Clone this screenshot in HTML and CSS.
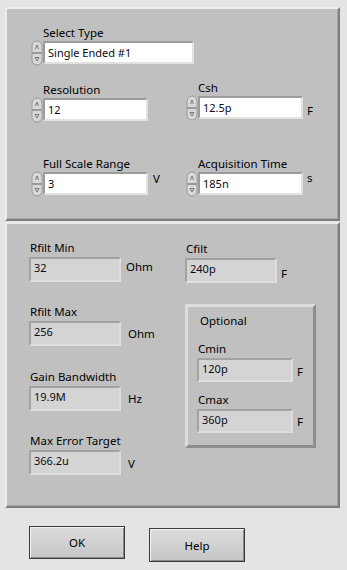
FILE: index.html
```html
<!DOCTYPE html>
<html lang="en">
<head>
    <meta charset="UTF-8">
    <meta name="viewport" content="width=device-width, initial-scale=1.0">
    <title>ADC Settings</title>
    <link rel="stylesheet" href="styles.css">
</head>
<body>
    <svg class="defs" width="0" height="0">
        <symbol id="spin" viewBox="0 0 12 26">
            <path d="M1 12.5 V6 a5 5 0 0 1 10 0 V12.5 Z" fill="#d8d8d8" stroke="#9a9a9a"/>
            <path d="M1 13.5 V20 a5 5 0 0 0 10 0 V13.5 Z" fill="#d8d8d8" stroke="#9a9a9a"/>
            <path d="M4.5 9 L6 5 L7.5 9" fill="none" stroke="#7a7a7a"/>
            <path d="M4 17.5 H8 L6 21 Z" fill="none" stroke="#7a7a7a"/>
        </symbol>
    </svg>

    <div class="panel panel-top">
        <div class="row">
            <div class="field">
                <div class="label">Select Type</div>
                <div class="ctl">
                    <svg class="spin"><use href="#spin"/></svg>
                    <div class="edit wide">Single Ended #1</div>
                </div>
            </div>
        </div>
        <div class="row row-2">
            <div class="field col1 down2">
                <div class="label">Resolution</div>
                <div class="ctl">
                    <svg class="spin"><use href="#spin"/></svg>
                    <div class="edit">12</div>
                </div>
            </div>
            <div class="field">
                <div class="label">Csh</div>
                <div class="ctl">
                    <svg class="spin"><use href="#spin"/></svg>
                    <div class="edit">12.5p</div>
                    <span class="unit off-9">F</span>
                </div>
            </div>
        </div>
        <div class="row row-3">
            <div class="field col1">
                <div class="label">Full Scale Range</div>
                <div class="ctl">
                    <svg class="spin"><use href="#spin"/></svg>
                    <div class="edit">3</div>
                    <span class="unit off-1 gap5">V</span>
                </div>
            </div>
            <div class="field">
                <div class="label">Acquisition Time</div>
                <div class="ctl">
                    <svg class="spin"><use href="#spin"/></svg>
                    <div class="edit">185n</div>
                    <span class="unit off-0">s</span>
                </div>
            </div>
        </div>
    </div>

    <div class="panel panel-bottom">
        <div class="row">
            <div class="col1-b">
                <div class="out">
                    <div class="out-label">Rfilt Min</div>
                    <div class="out-row">
                        <div class="ind">32</div>
                        <span class="unit off-3 gap5">Ohm</span>
                    </div>
                </div>
                <div class="out space-23">
                    <div class="out-label">Rfilt Max</div>
                    <div class="out-row">
                        <div class="ind">256</div>
                        <span class="unit off-6 gap7">Ohm</span>
                    </div>
                </div>
                <div class="out space-24">
                    <div class="out-label">Gain Bandwidth</div>
                    <div class="out-row">
                        <div class="ind">19.9M</div>
                        <span class="unit off-6 gap7">Hz</span>
                    </div>
                </div>
                <div class="out space-23">
                    <div class="out-label">Max Error Target</div>
                    <div class="out-row">
                        <div class="ind">366.2u</div>
                        <span class="unit off-7 gap7">V</span>
                    </div>
                </div>
            </div>
            <div class="col2-b">
                <div class="out">
                    <div class="out-label">Cfilt</div>
                    <div class="out-row">
                        <div class="ind">240p</div>
                        <span class="unit off-9">F</span>
                    </div>
                </div>
                <div class="group">
                    <div class="group-title">Optional</div>
                    <div class="out">
                        <div class="out-label">Cmin</div>
                        <div class="out-row">
                            <div class="ind small">120p</div>
                            <span class="unit off-7">F</span>
                        </div>
                    </div>
                    <div class="out space-11">
                        <div class="out-label">Cmax</div>
                        <div class="out-row">
                            <div class="ind small">360p</div>
                            <span class="unit off-6">F</span>
                        </div>
                    </div>
                </div>
            </div>
        </div>
    </div>

    <div class="buttons">
        <button class="btn">OK</button>
        <button class="btn btn-help">Help</button>
    </div>
</body>
</html>
```

FILE: styles.css
```css
body {
    margin: 0;
    width: 347px;
    height: 570px;
    overflow: hidden;
    background-color: #e4e4e4;
    font-family: "Noto Sans", "Liberation Sans", sans-serif;
    font-size: 11.5px;
    color: #000;
}
.defs {
    position: absolute;
}
.panel {
    margin-left: 5px;
    width: 335px;
    box-sizing: border-box;
    background-color: #c0c0c0;
    border: 2px solid;
    border-color: #ececec #7d7d7d #7d7d7d #ececec;
    box-shadow: inset -1px -1px 0 #a8a8a8;
}
.panel-top {
    margin-top: 7px;
    height: 214px;
    padding: 17px 0 0 24px;
}
.panel-bottom {
    margin-top: 1px;
    height: 286px;
    padding: 17px 0 0 22px;
}
.row {
    display: flex;
    align-items: flex-start;
}
.row-2 {
    margin-top: 15px;
}
.row-3 {
    margin-top: 34px;
}
.col1 {
    width: 155px;
}
.down2 {
    margin-top: 2px;
}
.label {
    line-height: 14px;
    padding-left: 12px;
    white-space: nowrap;
}
.ctl {
    display: flex;
    align-items: flex-start;
    height: 26px;
}
.spin {
    width: 12px;
    height: 26px;
    display: block;
}
.edit {
    margin-top: 1px;
    width: 105px;
    height: 23px;
    box-sizing: border-box;
    background-color: #fff;
    border: 2px solid;
    border-color: #9c9c9c #e2e2e2 #e2e2e2 #9c9c9c;
    padding-left: 3px;
    line-height: 19px;
    font-size: 11px;
    color: #0a0a14;
}
.edit.wide {
    width: 151px;
}
.unit {
    line-height: 14px;
    margin-left: 4px;
}
.gap5 { margin-left: 5px; }
.gap7 { margin-left: 7px; }
.off-0 { margin-top: 0; }
.off-1 { margin-top: 1px; }
.off-3 { margin-top: 3px; }
.off-6 { margin-top: 6px; }
.off-7 { margin-top: 7px; }
.off-9 { margin-top: 9px; }

/* indicators */
.col1-b {
    width: 156px;
}
.col2-b {
    margin-top: 1px;
}
.out-label {
    line-height: 14px;
    margin: 0 0 2px 1px;
    white-space: nowrap;
}
.out-row {
    display: flex;
    align-items: flex-start;
}
.ind {
    width: 92px;
    height: 25px;
    box-sizing: border-box;
    background-color: #d4d4d4;
    border: 2px solid;
    border-color: #a2a2a2 #dedede #dedede #a2a2a2;
    padding-left: 3px;
    line-height: 17px;
    font-size: 11px;
    color: #0a0a14;
}
.ind.small {
    width: 96px;
    height: 24px;
}
.space-11 { margin-top: 11px; }
.space-23 { margin-top: 23px; }
.space-24 { margin-top: 24px; }

.group {
    margin-top: 21px;
    width: 131px;
    height: 144px;
    box-sizing: border-box;
    border: 3px solid;
    border-color: #dcdcdc #8e8e8e #8e8e8e #dcdcdc;
    padding: 7px 0 0 9px;
}
.group-title {
    line-height: 14px;
    padding-left: 3px;
    margin-bottom: 14px;
}

/* buttons */
.buttons {
    display: flex;
    align-items: flex-start;
    gap: 24px;
    padding-left: 29px;
    margin-top: 18px;
}
.btn {
    width: 96px;
    height: 33px;
    box-sizing: border-box;
    border: 1px solid #3a3a3a;
    background: linear-gradient(#dcdcdc, #c6c6c6);
    box-shadow: inset 1px 1px 0 #f4f4f4, inset -1px -1px 0 #8a8a8a;
    font-family: "Noto Sans", "Liberation Sans", sans-serif;
    font-size: 11.5px;
    color: #000;
    padding: 0;
}
.btn-help {
    margin-top: 2px;
    height: 34px;
}
```
